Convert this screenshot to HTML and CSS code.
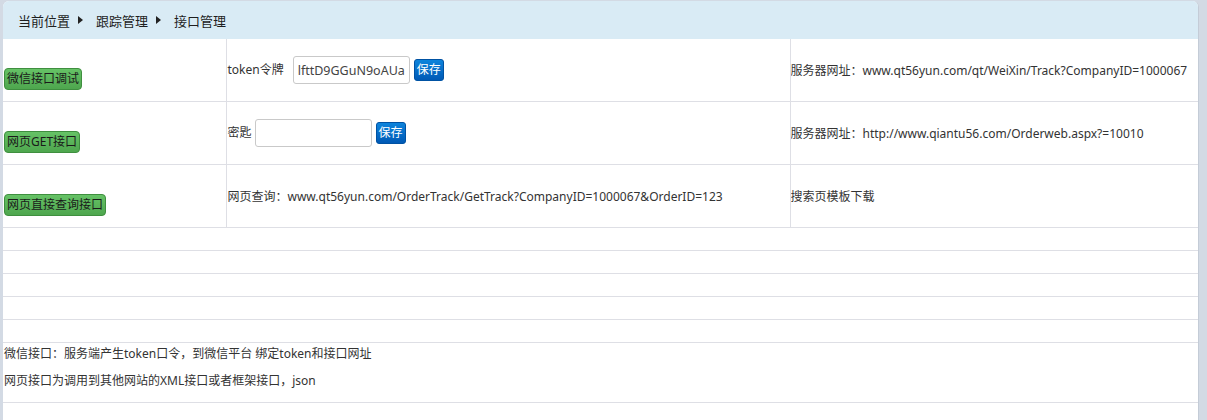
FILE: index.html
```html
<!DOCTYPE html>
<html lang="zh-CN">
<head>
<meta charset="utf-8">
<title>接口管理</title>
<link rel="stylesheet" href="styles.css">
</head>
<body>
<div class="panel">
  <div class="crumbs">
    <span>当前位置</span><span class="tri"></span>
    <span>跟踪管理</span><span class="tri"></span>
    <span>接口管理</span>
  </div>
  <table class="grid">
    <colgroup><col class="c1"><col class="c2"><col class="c3"></colgroup>
    <tr class="main">
      <td class="btncell"><span class="gbtn">微信接口调试</span></td>
      <td class="mid"><span class="lbl lbl-token">token令牌</span><input class="inp" type="text" value="lfttD9GGuN9oAUalXyZ"><span class="bbtn">保存</span></td>
      <td class="right">服务器网址：www.qt56yun.com/qt/WeiXin/Track?CompanyID=1000067</td>
    </tr>
    <tr class="main">
      <td class="btncell"><span class="gbtn">网页GET接口</span></td>
      <td class="mid"><span class="lbl lbl-key">密匙</span><input class="inp" type="text" value=""><span class="bbtn">保存</span></td>
      <td class="right">服务器网址：http://www.qiantu56.com/Orderweb.aspx?=10010</td>
    </tr>
    <tr class="main">
      <td class="btncell"><span class="gbtn">网页直接查询接口</span></td>
      <td class="mid">网页查询：www.qt56yun.com/OrderTrack/GetTrack?CompanyID=1000067&amp;OrderID=123</td>
      <td class="right">搜索页模板下载</td>
    </tr>
    <tr class="empty"><td colspan="3"></td></tr>
    <tr class="empty"><td colspan="3"></td></tr>
    <tr class="empty"><td colspan="3"></td></tr>
    <tr class="empty"><td colspan="3"></td></tr>
    <tr class="empty"><td colspan="3"></td></tr>
    <tr class="notes">
      <td colspan="3">
        <div class="note">微信接口：服务端产生token口令，到微信平台 绑定token和接口网址</div>
        <div class="note">网页接口为调用到其他网站的XML接口或者框架接口，json</div>
      </td>
    </tr>
  </table>
</div>
</body>
</html>
```
FILE: styles.css
```css
html, body {
  margin: 0;
  padding: 0;
}
body {
  background: #d3dae4;
  font-family: "Noto Sans", "Noto Sans CJK SC", sans-serif;
  font-size: 12px;
  color: #333;
  height: 420px;
  overflow: hidden;
}
.panel {
  margin: 1px 0 0 3px;
  width: 1195px;
  height: 419px;
  background: #fff;
  border-right: 1px solid #c4ccd7;
  border-radius: 6px 6px 0 0;
  overflow: hidden;
}
.crumbs {
  height: 38px;
  background: #d9ebf5;
  display: flex;
  align-items: center;
  padding-left: 15px;
  font-size: 13px;
  color: #1e1e1e;
}
.tri {
  display: inline-block;
  width: 0;
  height: 0;
  border-top: 4px solid transparent;
  border-bottom: 4px solid transparent;
  border-left: 5px solid #222;
  margin: 0 13px 0 8px;
}
.grid {
  width: 1196px;
  border-collapse: collapse;
  table-layout: fixed;
}
.c1 { width: 223px; }
.c2 { width: 564px; }
.c3 { width: 409px; }
.grid td {
  padding: 0;
  border-bottom: 1px solid #dedfe5;
}
.main td {
  height: 62px;
  vertical-align: middle;
}
.main td + td {
  border-left: 1px solid #dedfe5;
}
.main td.btncell {
  height: 51px;
  vertical-align: bottom;
  padding: 0 0 11px 1px;
}
.gbtn {
  display: inline-block;
  height: 20px;
  line-height: 20px;
  padding: 0 2px;
  border: 1px solid #3f8f3f;
  border-radius: 4px;
  background: linear-gradient(#66c266, #4ea64e);
  color: #1a1a1a;
  font-size: 12px;
  white-space: nowrap;
}
.main td.mid {
  padding-left: 1px;
  white-space: nowrap;
}
.main td.right {
  padding-left: 0;
  white-space: nowrap;
  overflow: hidden;
}
.lbl {
  display: inline-block;
  vertical-align: middle;
}
.lbl-token { margin-right: 9px; position: relative; top: -1px; }
.lbl-key { margin-right: 3px; position: relative; top: -1px; }
.inp {
  box-sizing: border-box;
  width: 117px;
  height: 28px;
  border: 1px solid #c9c9c9;
  border-radius: 3px;
  padding: 0 4px;
  font-family: "Noto Sans", sans-serif;
  font-size: 12.5px;
  color: #444;
  vertical-align: middle;
  overflow: hidden;
}
.bbtn {
  display: inline-block;
  box-sizing: border-box;
  width: 30px;
  height: 22px;
  line-height: 20px;
  margin-left: 4px;
  border: 1px solid #0052a3;
  border-radius: 3px;
  background: linear-gradient(#0d84dc, #0059b5);
  color: #fff;
  font-size: 12px;
  text-align: center;
  vertical-align: middle;
}
.empty td {
  height: 22px;
}
.notes td {
  padding: 0 0 10px 1px;
}
.note {
  line-height: 22px;
}
.note + .note {
  margin-top: 5px;
}
```
